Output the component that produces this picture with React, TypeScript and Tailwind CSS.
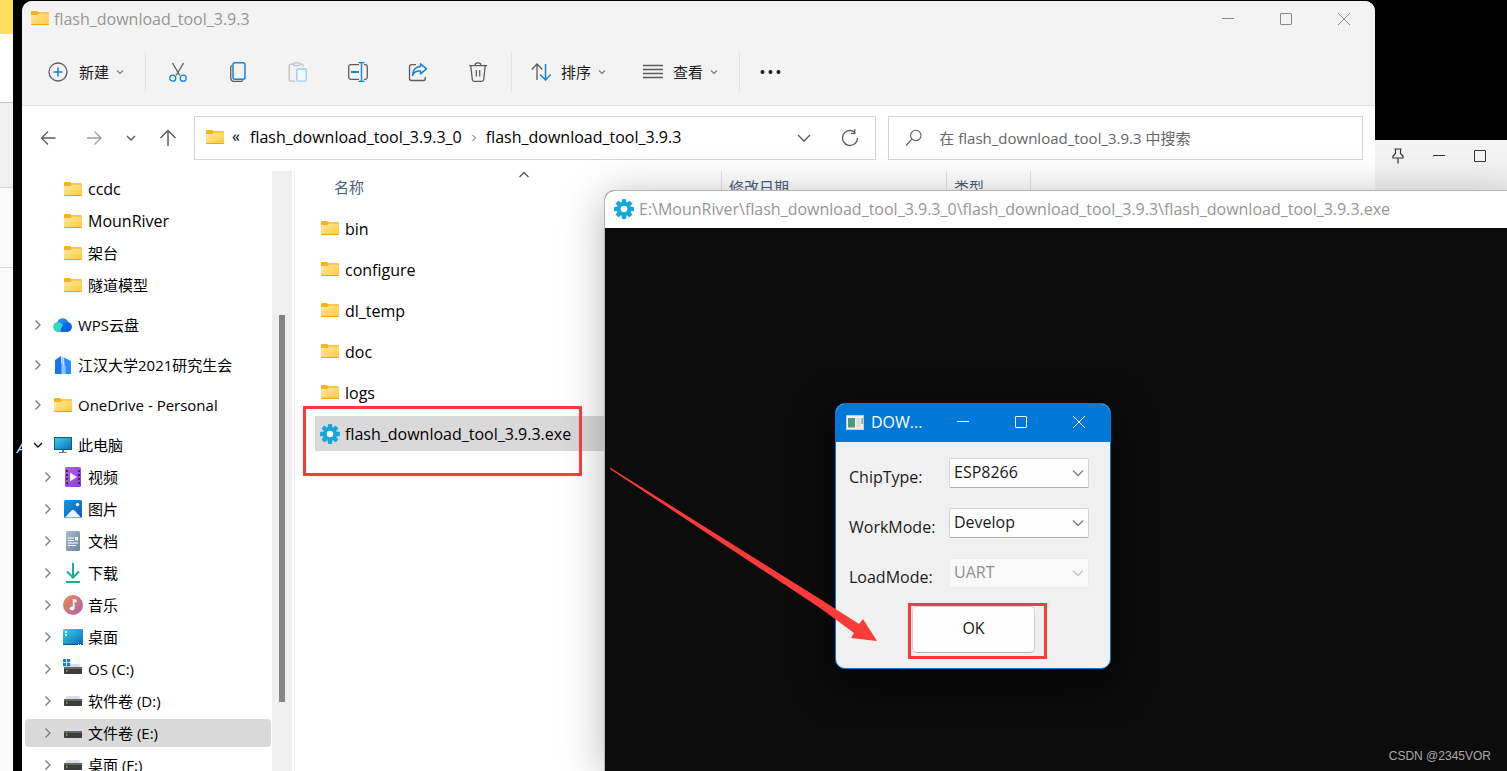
import React, { useId } from "react";

type IconProps = { className?: string };

const Folder = ({ className = "" }: IconProps) => {
  const id = useId();
  return (
    <svg className={`shrink-0 ${className}`} width="18" height="15" viewBox="0 0 18 15" aria-hidden="true">
      <defs>
        <linearGradient id={id} x1="0" y1="0" x2="1" y2="1">
          <stop offset="0" stopColor="#ffe8a0" />
          <stop offset="1" stopColor="#ffca3a" />
        </linearGradient>
      </defs>
      <path d="M0 1a1 1 0 0 1 1-1h5l1.500 1.300H17a1 1 0 0 1 1 1V6H0z" fill="#f6b31b" />
      <path d="M0 4h6.500L8 2.500h10V13a1 1 0 0 1-1 1H1a1 1 0 0 1-1-1z" fill={`url(#${id})`} />
      <path d="M0 13h18a1 1 0 0 1-1 1H1a1 1 0 0 1-1-1z" fill="#e9a320" />
    </svg>
  );
};

const Chevron = ({ dir, className = "" }: { dir: "down" | "right" | "up"; className?: string }) => {
  const d = { down: "M1 3l4 4 4-4", right: "M2.500 0.500L7 5 2.500 9.500", up: "M0.500 7L5 2.500 9.500 7" }[dir];
  return (
    <svg className={`shrink-0 ${className}`} width="10" height="10" viewBox="0 0 10 10" fill="none" stroke="currentColor" strokeWidth="1.3" aria-hidden="true">
      <path d={d} />
    </svg>
  );
};

const MenuChevron = () => (
  <svg className="ml-[7px] shrink-0 text-[#777]" width="8" height="8" viewBox="0 0 8 8" fill="none" stroke="currentColor" strokeWidth="1.1" aria-hidden="true">
    <path d="M1 2.500l3 3 3-3" />
  </svg>
);

const Gear = () => (
  <svg className="shrink-0" width="20" height="20" viewBox="0 0 20 20" fill="#0fa9dc" aria-hidden="true">
    {[0, 45, 90, 135].map((a) => (
      <rect key={a} x="7.800" y="0" width="4.400" height="20" rx="1.200" transform={`rotate(${a} 10 10)`} />
    ))}
    <circle cx="10" cy="10" r="7.200" />
    <circle cx="10" cy="10" r="3.300" fill="#fff" />
  </svg>
);

const Svg = ({ children, size = 20 }: { children: React.ReactNode; size?: number }) => (
  <svg className="shrink-0" width={size} height={size} viewBox={`0 0 ${size} ${size}`} fill="none" stroke="#5c5c5c" strokeWidth="1.3" aria-hidden="true">
    {children}
  </svg>
);

const MinIcon = () => (
  <svg width="12" height="12" viewBox="0 0 12 12" stroke="currentColor" aria-hidden="true"><path d="M0 5.500h12" /></svg>
);
const MaxIcon = () => (
  <svg width="12" height="12" viewBox="0 0 12 12" fill="none" stroke="currentColor" aria-hidden="true"><rect x=".5" y=".5" width="11" height="11" rx=".5" /></svg>
);
const CloseIcon = () => (
  <svg width="12" height="12" viewBox="0 0 12 12" stroke="currentColor" aria-hidden="true"><path d="M0 0l12 12M12 0L0 12" /></svg>
);

const tools: { label: string; icon: React.ReactNode }[] = [
  {
    label: "剪切",
    icon: (
      <Svg>
        <path d="M4.500 1l7.300 12.500M15.500 1L8.200 13.500" />
        <g stroke="#1583d8"><circle cx="4.800" cy="16.200" r="3" /><circle cx="15.200" cy="16.200" r="3" /></g>
      </Svg>
    ),
  },
  {
    label: "复制",
    icon: (
      <Svg>
        <path d="M4 3.500C3 4 2.700 4.500 2.700 5.500v10c0 2.500 1.300 4 4 4h6c1 0 1.600-.5 2-1.300" />
        <rect x="5" y=".7" width="12" height="16.600" rx="2" stroke="#1583d8" strokeWidth="1.500" />
      </Svg>
    ),
  },
  {
    label: "粘贴",
    icon: (
      <Svg>
        <g stroke="#c0c0c0"><path d="M6 2.200H2.700a1.500 1.500 0 0 0-1.500 1.500v14a1.500 1.500 0 0 0 1.500 1.500H7M12 2.200h1.500A1.500 1.500 0 0 1 15 3.700V5" /><rect x="5.500" y=".8" width="6.500" height="2.800" rx="1.400" /></g>
        <rect x="8.800" y="7" width="9.400" height="12.200" rx="1.500" stroke="#9ccbee" fill="#f3f8fb" />
      </Svg>
    ),
  },
  {
    label: "重命名",
    icon: (
      <Svg>
        <path d="M11 2.700H2.500A2 2 0 0 0 .7 4.700v10.600a2 2 0 0 0 1.800 2H11M16 2.700h1.500a2 2 0 0 1 1.800 2v10.600a2 2 0 0 1-1.800 2H16" />
        <g stroke="#1583d8"><path d="M3 10h8" strokeWidth="2.200" /><path d="M13.500.5v19M10.500.6h6M10.500 19.400h6" strokeWidth="1.400" /></g>
      </Svg>
    ),
  },
  {
    label: "共享",
    icon: (
      <Svg>
        <path d="M8 2.700H3.500a2 2 0 0 0-2 2v11.800a2 2 0 0 0 2 2h11.800a2 2 0 0 0 2-2V15" />
        <path d="M12.500 1.800l6 5-6 5V9C8.500 8.500 6 10 4.500 13.500 4.700 8.500 7.500 5 12.500 4.600z" stroke="#1583d8" strokeWidth="1.500" strokeLinejoin="round" />
      </Svg>
    ),
  },
  {
    label: "删除",
    icon: (
      <Svg>
        <path d="M1 3.700h18M7 3.500a3 2.600 0 0 1 6 0M2.800 4l1.500 13.500a2 2 0 0 0 2 1.800h7.400a2 2 0 0 0 2-1.800L17.200 4M8.300 8v6.500M11.700 8v6.500" />
      </Svg>
    ),
  },
];

const Drive = ({ system = false }: { system?: boolean }) => (
  <svg width="20" height="20" viewBox="0 0 20 20" aria-hidden="true">
    <path d="M4 5h12l3 4H1z" fill="#dcdce4" />
    <rect x="1" y="8" width="18" height="7" rx=".8" fill="#3d3d3d" />
    <rect x="1" y="8" width="18" height="2" fill="#666" />
    <rect x="3" y="11" width="1.500" height="1.500" fill="#48e04c" />
    {system && <path d="M0 0h3.200v3.200H0zM4 0h3.200v3.200H4zM0 4h3.200v3.200H0zM4 4h3.200v3.200H4z" fill="#1583d8" />}
  </svg>
);

const Glyph = ({ kind }: { kind: string }) => {
  const g = useId();
  const grad = (a: string, b: string) => (
    <defs>
      <linearGradient id={g} x1="0" y1="0" x2="1" y2="1"><stop offset="0" stopColor={a} /><stop offset="1" stopColor={b} /></linearGradient>
    </defs>
  );
  const fill = `url(#${g})`;
  if (kind === "folder") return <Folder />;
  if (kind === "drive") return <Drive />;
  if (kind === "system") return <Drive system />;
  return (
    <svg width="20" height="20" viewBox="0 0 20 20" aria-hidden="true">
      {kind === "cloud" && (
        <>
          {grad("#20a0f8", "#0a5ce0")}
          <path d="M5 16.800a4.800 4.800 0 0 1-.6-9.500A5.600 5.600 0 0 1 15 7a5 5 0 0 1-.4 9.800z" fill={fill} />
          <path d="M5.300 16.800a4.800 4.800 0 1 1 3.900-7.500C11.500 12 10 15 7.800 16.800z" fill="#2fdcc0" />
          <path d="M7.800 16.800c-.8-4 2.500-7.600 8-9.300a5 5 0 0 1-1.200 9.300z" fill="#0b63e5" />
        </>
      )}
      {kind === "building" && (
        <>
          <path d="M2 5l6-4v7l2 1v10H2z" fill="#1a73f0" />
          <path d="M11 2.500L18 6v13h-6z" fill="#2a8cff" />
          <path d="M8.500 2l2-1v9l2 1v8h-4z" fill="#8cc8ff" />
        </>
      )}
      {kind === "pc" && (
        <>
          {grad("#34d5e4", "#0c69bd")}
          <rect x="1.500" y="2.500" width="17" height="12" fill={fill} stroke="#15597e" />
          <path d="M9 15h2v2h3v1H6v-1h3z" fill="#6d7f8c" />
        </>
      )}
      {kind === "video" && (
        <>
          {grad("#ae5cf0", "#8b3fe0")}
          <rect x="2" y="0" width="16" height="20" rx="1.500" fill={fill} />
          <path d="M4 3v16M16 3v16" stroke="#431a7e" strokeWidth="2" strokeDasharray="2 2" />
          <path d="M7 5.500l7 4.500-7 4.500z" fill="#f4eaff" />
        </>
      )}
      {kind === "image" && (
        <>
          {grad("#159be4", "#0b5cb5")}
          <rect x="1" y="1" width="18" height="18" rx="1.500" fill={fill} />
          <path d="M2 18.500l6.500-7a2 2 0 0 1 3 0l6.500 7z" fill="#eff8ff" />
          <circle cx="14.500" cy="5.500" r="1.700" fill="#fff" />
        </>
      )}
      {kind === "doc" && (
        <>
          {grad("#adbccd", "#6684a3")}
          <rect x="3" y="0" width="14" height="20" rx="1.500" fill={fill} />
          <path d="M5 7h6M5 9.500h6M5 12h10M5 14.500h8" stroke="#fff" strokeWidth="1.200" />
          <rect x="12" y="6" width="3" height="3.500" fill="#fff" />
        </>
      )}
      {kind === "download" && (
        <g fill="none" stroke="#1bae8c" strokeWidth="2">
          <path d="M10 0v14M4 8.500l6 6 6-6M3 19h14" />
        </g>
      )}
      {kind === "music" && (
        <>
          {grad("#f28a4c", "#a560b4")}
          <circle cx="10" cy="10" r="10" fill={fill} />
          <ellipse cx="9" cy="13.500" rx="2.300" ry="2" fill="#fff" />
          <path d="M9.800 4l4 .8v2.400l-2.300-.3v6.600H9.800z" fill="#fff" />
        </>
      )}
      {kind === "desktop" && (
        <>
          {grad("#2fd3e4", "#0a68be")}
          <rect x="0" y="2" width="20" height="16" rx="1" fill={fill} />
          <path d="M2 4h2v2H2zM2 7h2v2H2z" fill="#fff" />
          <path d="M0 17h20v.5a.5.5 0 0 1-.5.500H.5a.5.500 0 0 1-.5-.5z" fill="#0d4f86" />
          <path d="M15 17h1v1h-1zM17 17h1v1h-1z" fill="#fff" />
        </>
      )}
    </svg>
  );
};

const quick = ["ccdc", "MounRiver", "架台", "隧道模型"];
const roots = [
  { label: "WPS云盘", kind: "cloud" },
  { label: "江汉大学2021研究生会", kind: "building" },
  { label: "OneDrive - Personal", kind: "folder" },
  { label: "此电脑", kind: "pc", open: true },
];
const places = [
  { label: "视频", kind: "video" },
  { label: "图片", kind: "image" },
  { label: "文档", kind: "doc" },
  { label: "下载", kind: "download" },
  { label: "音乐", kind: "music" },
  { label: "桌面", kind: "desktop" },
  { label: "OS (C:)", kind: "system" },
  { label: "软件卷 (D:)", kind: "drive" },
  { label: "文件卷 (E:)", kind: "drive", selected: true },
  { label: "桌面 (F:)", kind: "drive" },
];
const files = ["bin", "configure", "dl_temp", "doc", "logs"];

const TreeItem = ({ label, kind, nested = false, chevron, selected = false }: { label: string; kind: string; nested?: boolean; chevron?: "right" | "down"; selected?: boolean }) => (
  <li className={`flex h-8 items-center ${nested ? "" : "mt-2"}`}>
    <button type="button" className={`ml-[3px] mr-px flex h-7 flex-1 items-center rounded-sm text-left ${nested ? "pl-[18px]" : "pl-2"} ${selected ? "bg-[#d9d9d9]" : ""}`}>
      <span className="flex w-5 items-center">
        {chevron && <Chevron dir={chevron} className={chevron === "down" ? "text-black" : "text-[#777]"} />}
      </span>
      <span className="flex w-5 shrink-0 justify-center"><Glyph kind={kind} /></span>
      <span className={`ml-[5px] whitespace-nowrap ${/^[A-Za-z]+$/.test(label) ? "text-base leading-5" : ""}`}>{label}</span>
    </button>
  </li>
);

function Explorer() {
  return (
    <section className="absolute bottom-0 left-[22px] right-[132px] top-px flex flex-col overflow-hidden rounded-t-[10px] bg-white" aria-label="文件资源管理器">
      <header className="flex h-[37px] shrink-0 items-center bg-[#f3f3f3] pb-0.5 pl-[9px] text-[#969696]">
        <Folder />
        <h1 className="ml-[5px] flex-1 text-base leading-5">flash_download_tool_3.9.3</h1>
        <div className="flex h-full pr-0.5 text-[#8a8a8a]">
          <button type="button" aria-label="最小化" className="flex w-[58px] items-center justify-center"><MinIcon /></button>
          <button type="button" aria-label="最大化" className="flex w-[58px] items-center justify-center"><MaxIcon /></button>
          <button type="button" aria-label="关闭" className="flex w-[58px] items-center justify-center"><CloseIcon /></button>
        </div>
      </header>

      <div className="flex h-[68px] shrink-0 items-center border-b border-[#dedede] bg-[#f3f3f3] text-[#1b1b1b]">
        <button type="button" className="ml-[26px] flex items-center">
          <Svg><circle cx="10" cy="10" r="9" /><path d="M10 5.500v9M5.500 10h9" stroke="#1583d8" strokeWidth="1.500" /></Svg>
          <span className="ml-[11px]">新建</span>
          <MenuChevron />
        </button>
        <span className="ml-[21px] h-10 w-px bg-[#e2e2e2]" />
        <div className="ml-0.5 mr-[3px] flex">
          {tools.map((t) => (
            <button key={t.label} type="button" aria-label={t.label} className="flex h-10 w-[60px] items-center justify-center">{t.icon}</button>
          ))}
        </div>
        <span className="h-10 w-px bg-[#e2e2e2]" />
        <button type="button" className="ml-[19px] flex items-center">
          <Svg>
            <path d="M6 18V2M.7 7.500L6 2l5.300 5.500" />
            <path d="M14.500 2v16M9.200 12.500l5.300 5.500 5.300-5.500" stroke="#1583d8" strokeWidth="1.500" />
          </Svg>
          <span className="ml-2.5">排序</span>
          <MenuChevron />
        </button>
        <button type="button" className="ml-[37px] flex items-center">
          <Svg><path d="M0 3.500h20M0 7.500h20M0 11.500h20M0 15.500h20" /></Svg>
          <span className="ml-2.5">查看</span>
          <MenuChevron />
        </button>
        <span className="ml-[21px] h-10 w-px bg-[#e2e2e2]" />
        <button type="button" aria-label="更多" className="ml-5">
          <svg width="22" height="20" viewBox="0 0 22 20" fill="#1b1b1b"><circle cx="2.500" cy="10" r="2" /><circle cx="10.500" cy="10" r="2" /><circle cx="18.500" cy="10" r="2" /></svg>
        </button>
      </div>

      <div className="flex h-[65px] shrink-0 items-center pb-0.5 pl-4 pr-3">
        <button type="button" aria-label="后退"><Svg><path d="M17.500 10H3.500M10 3.500L3.500 10l6.500 6.500" /></Svg></button>
        <button type="button" aria-label="前进" className="ml-[26px] opacity-60"><Svg><path d="M3 10h14M10.500 3.500L17 10l-6.500 6.500" /></Svg></button>
        <button type="button" aria-label="最近" className="ml-[22px] text-[#555]"><Chevron dir="down" /></button>
        <button type="button" aria-label="上移" className="ml-[22px]"><Svg><path d="M10 18V3M2.500 10L10 2.500l7.500 7.500" strokeWidth="1.500" /></Svg></button>
        <nav aria-label="地址" className="ml-4 flex h-11 flex-681 items-center border border-[#d6d6d6] pl-[11px] pr-4 text-base leading-5 text-black">
          <Folder />
          <span className="ml-2 w-[18px] pb-1">«</span>
          <a href="#parent" className="whitespace-nowrap pb-px">flash_download_tool_3.9.3_0</a>
          <Chevron dir="right" className="mx-[7px] scale-75 text-[#555]" />
          <a href="#current" className="flex-1 whitespace-nowrap pb-px">flash_download_tool_3.9.3</a>
          <button type="button" aria-label="历史" className="text-[#555]">
            <svg width="14" height="14" viewBox="0 0 14 14" fill="none" stroke="currentColor" strokeWidth="1.300"><path d="M1 4l6 6 6-6" /></svg>
          </button>
          <button type="button" aria-label="刷新" className="ml-[30px]">
            <Svg size={18}><path d="M16.500 9A7.500 7.500 0 1 1 13.500 3M13.800.3v4h-4" /></Svg>
          </button>
        </nav>
        <div className="ml-3 flex h-11 flex-476 items-center border border-[#d6d6d6] pl-4">
          <label htmlFor="search" aria-label="搜索">
            <Svg size={18}><circle cx="10.800" cy="6.500" r="5.200" strokeWidth="1.100" /><path d="M7 10.200L1 16.500" strokeWidth="1.100" /></Svg>
          </label>
          <input id="search" type="text" placeholder="在 flash_download_tool_3.9.3 中搜索" className="ml-4 h-7 min-w-0 flex-1 bg-transparent outline-none placeholder:text-[#666]" />
        </div>
      </div>

      <div className="flex min-h-0 flex-1 text-black">
        <ul className="w-[250px] shrink-0 overflow-hidden pt-0.5">
          {quick.map((q) => <TreeItem key={q} label={q} kind="folder" nested />)}
          {roots.map((r) => <TreeItem key={r.label} label={r.label} kind={r.kind} chevron={r.open ? "down" : "right"} />)}
          {places.map((p) => <TreeItem key={p.label} label={p.label} kind={p.kind} nested chevron="right" selected={p.selected} />)}
        </ul>
        <div className="w-5 shrink-0 bg-[#efefef] pl-[7px] pt-36">
          <div className="h-[387px] w-1.5 bg-[#858585]" />
        </div>
        <div className="ml-0.5 flex-1 border-l border-[#f0f0f0]">
          <table className="w-full table-fixed border-separate border-spacing-0 text-left">
            <thead>
              <tr className="h-[37px] align-top leading-8 text-[#4c607a]">
                <th className="relative w-[427px] border-r border-[#e5e5e5] p-0 pl-[39px] font-normal">
                  名称
                  <Chevron dir="up" className="absolute -top-px left-[224px] text-[#555]" />
                </th>
                <th className="w-[225px] border-r border-[#e5e5e5] p-0 pl-[7px] font-normal">修改日期</th>
                <th className="w-[84px] border-r border-[#e5e5e5] p-0 pl-[7px] font-normal">类型</th>
                <th className="p-0" />
              </tr>
            </thead>
            <tbody className="text-base leading-5">
              {files.map((f) => (
                <tr key={f} className="h-[41px]">
                  <td className="p-0 pl-[26px]" colSpan={4}>
                    <span className="flex items-center"><Folder /><span className="ml-1.5">{f}</span></span>
                  </td>
                </tr>
              ))}
              <tr className="h-[41px]">
                <td className="border-y-[3px] border-l-[20px] border-transparent bg-[#d9d9d9] bg-clip-padding p-0 pl-[5px]" colSpan={4}>
                  <span className="flex items-center"><Gear /><span className="ml-[5px]">flash_download_tool_3.9.3.exe</span></span>
                </td>
              </tr>
            </tbody>
          </table>
        </div>
      </div>
    </section>
  );
}

function Console() {
  return (
    <section className="absolute -right-3 bottom-0 left-[604px] top-[190px] flex flex-col overflow-hidden rounded-tl-[10px] border-l border-t border-[#b4b4b4] bg-[#0c0c0c] shadow-[0_6px_44px_rgba(0,0,0,0.28)]" aria-label="控制台">
      <header className="flex h-[37px] items-center bg-white pb-0.5 pl-[9px] text-[#969696]">
        <Gear />
        <h2 className="ml-[5px] whitespace-nowrap text-base leading-5">E:\MounRiver\flash_download_tool_3.9.3_0\flash_download_tool_3.9.3\flash_download_tool_3.9.3.exe</h2>
      </header>
    </section>
  );
}

const fields = [
  { id: "chip", label: "ChipType:", value: "ESP8266" },
  { id: "work", label: "WorkMode:", value: "Develop" },
  { id: "load", label: "LoadMode:", value: "UART", disabled: true },
];

function Dialog() {
  return (
    <section role="dialog" aria-label="DOWNLOAD" className="absolute left-[835px] top-[403px] w-[276px] overflow-hidden rounded-[10px] border border-[#0078d7] bg-[#f0f0f0] text-base leading-5 text-[#1a1a1a] shadow-[0_12px_40px_rgba(0,0,0,0.8)]">
      <header className="flex h-[38px] items-center bg-[#0078d7] pb-0.5 pl-2.5 pr-0.5 text-white">
        <svg width="18" height="15" viewBox="0 0 18 15" aria-hidden="true">
          <rect x=".5" y=".5" width="17" height="14" fill="#f2f2f2" stroke="#c9c9c9" />
          <rect x="2" y="3" width="7" height="9.500" fill="#4a9a80" />
          <rect x="10.500" y="3" width="4" height="9.500" fill="#dcdcdc" />
          <rect x="15.500" y="3" width="1.200" height="6" fill="#4a9a80" />
        </svg>
        <h2 className="ml-[7px] flex-1">DOW...</h2>
        <button type="button" aria-label="最小化" className="flex h-full w-[58px] items-center justify-center"><MinIcon /></button>
        <button type="button" aria-label="最大化" className="flex h-full w-[58px] items-center justify-center"><MaxIcon /></button>
        <button type="button" aria-label="关闭" className="flex h-full w-[58px] items-center justify-center"><CloseIcon /></button>
      </header>
      <form className="px-[13px] pb-[15px] pt-4" onSubmit={(e) => e.preventDefault()}>
        <div className="flex flex-col gap-5">
          {fields.map((f) => (
            <div key={f.id} className="flex h-[30px]">
              <label htmlFor={f.id} className="w-[100px] pt-[9px]">{f.label}</label>
              <div className="relative w-[140px]">
                <select id={f.id} defaultValue={f.value} disabled={f.disabled} className={`h-[30px] w-full appearance-none rounded-xs border pb-0.5 pl-1 opacity-100 ${f.disabled ? "border-[#ebebeb] bg-[#f9f9f9] text-[#8f8f8f]" : "border-[#d4d4d4] border-b-[#b0b0b0] bg-[#fdfdfd] text-[#1a1a1a]"}`}>
                  <option>{f.value}</option>
                </select>
                <svg className={`pointer-events-none absolute right-[5px] top-[9px] ${f.disabled ? "text-[#c4c4c4]" : "text-[#808080]"}`} width="12" height="12" viewBox="0 0 12 12" fill="none" stroke="currentColor" strokeWidth="1.400"><path d="M1 3.500l5 5 5-5" /></svg>
              </div>
            </div>
          ))}
        </div>
        <button type="submit" className="ml-[63px] mt-[18px] block h-[47px] w-[123px] rounded-[5px] border border-[#d0d0d0] border-b-[#b4b4b4] bg-[#fdfdfd] pb-1">OK</button>
      </form>
    </section>
  );
}

export default function App() {
  return (
    <main className="relative h-screen overflow-hidden bg-black font-['Open_Sans','Noto_Sans_CJK_SC',sans-serif] text-[15px] leading-5">
      <div className="absolute inset-y-0 left-0 flex w-[13px] flex-col bg-[#fafafa]">
        <div className="h-[34px] bg-[#fddc5e]" />
        <div className="h-[69px] border-b border-[#c4c4c4] bg-white" />
        <div className="h-[85px] border-b border-[#d8d8d8] bg-[#f0f0f0]" />
        <div className="h-20 border-b border-[#d8d8d8]" />
      </div>
      <span className="absolute left-[17px] top-[437px] italic text-[#d5e6f5]">A</span>

      <div className="absolute bottom-0 right-0 top-[140px] flex w-[132px] items-start gap-[30px] bg-[#f3f3f3] pl-4 pt-2 text-[#333]">
        <svg width="14" height="16" viewBox="0 0 14 16" fill="none" stroke="currentColor" strokeWidth="1.200" aria-label="置顶"><path d="M3.500 1h7M4.500 1v4.500L2 8v2h10V8L9.500 5.500V1M7 10v5.500" /></svg>
        <span className="-ml-0.5 pt-0.5"><MinIcon /></span>
        <span className="-ml-px pt-0.5"><MaxIcon /></span>
      </div>

      <Explorer />
      <Console />
      <Dialog />

      <div className="pointer-events-none absolute left-[303px] top-[406px] h-[70px] w-[279px] border-[3px] border-[#fb3a3a]" />
      <div className="pointer-events-none absolute left-[908px] top-[603px] h-14 w-[139px] border-[3px] border-[#fb3a3a]" />
      <svg className="pointer-events-none absolute left-[600px] top-[460px]" width="290" height="190" viewBox="0 0 290 190" fill="#fb3a3a" aria-hidden="true">
        <path d="M10 7.500L220 139l39 25 4-5 14 22-26-3 3-5-34-25L10 9z" />
      </svg>
      <p className="absolute bottom-[7px] right-4 font-['Liberation_Sans',sans-serif] text-xs leading-4 text-[#a9a9a9]">CSDN @2345VOR</p>
    </main>
  );
}
